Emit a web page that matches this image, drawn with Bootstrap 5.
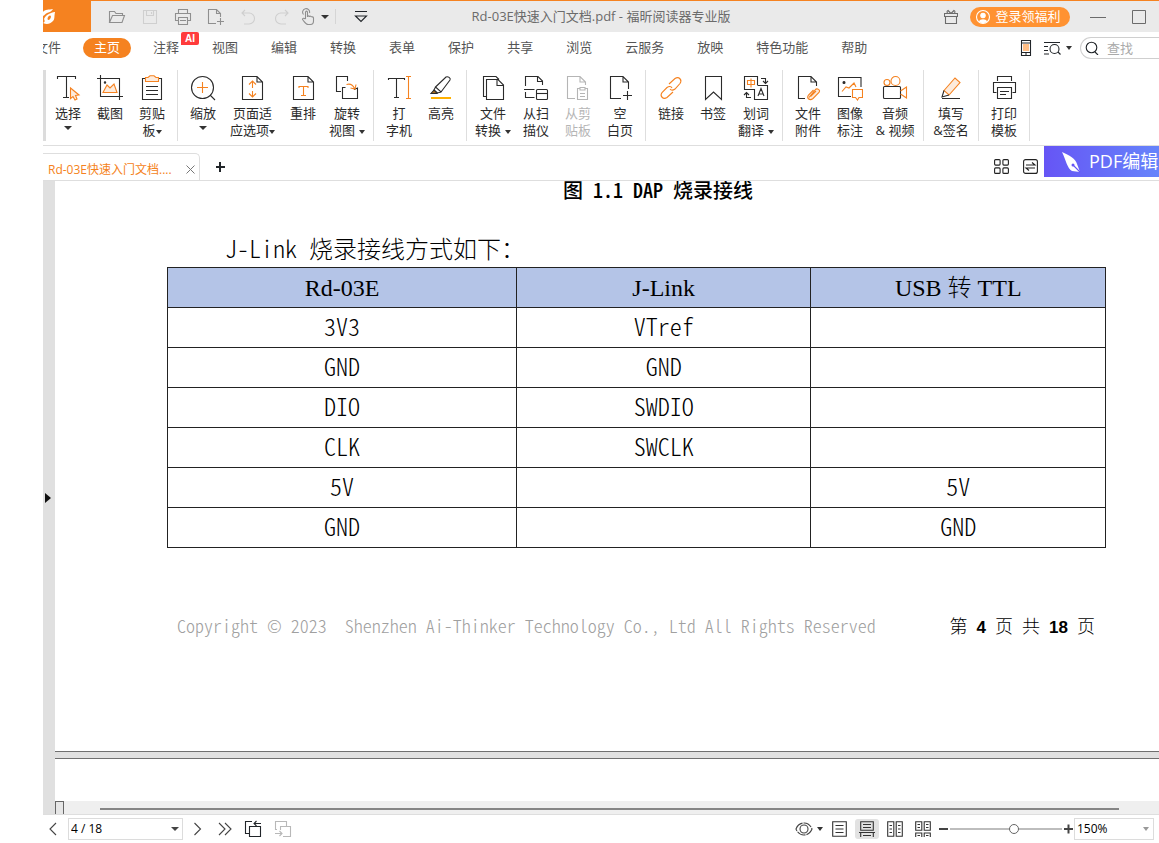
<!DOCTYPE html>
<html lang="zh-CN">
<head>
<meta charset="utf-8">
<meta name="viewport" content="width=device-width, initial-scale=1">
<title>Rd-03E快速入门文档.pdf - 福昕阅读器专业版</title>
<link href="https://cdn.jsdelivr.net/npm/bootstrap@5.3.0/dist/css/bootstrap.min.css" rel="stylesheet">
<script src="https://cdn.jsdelivr.net/npm/bootstrap@5.3.0/dist/js/bootstrap.bundle.min.js" defer></script>
<style>
:root{--fx:#f58220;--ln:#dedede;--ink:#2b2b2b}
body{font-family:"Open Sans","Noto Sans CJK SC",sans-serif;font-size:13px;line-height:17px;color:#222;background:#fff}
svg{display:block;fill:none;stroke:currentColor;stroke-width:1.1;flex:none}
button{background:none;border:0;padding:0;color:inherit;font:inherit;line-height:inherit}
.app{margin-left:43px;height:100vh;overflow:hidden}
.or{stroke:var(--fx)}
.orf{stroke:var(--fx);fill:#fdebdc}
.tri{display:inline-block;border:solid transparent;border-width:4px 4px 0;border-top-color:#333;vertical-align:middle;flex:none}
/* title bar */
.titlebar{height:32px;background:#eaeaea;border-top:1px solid var(--fx);display:grid;grid-template-columns:1fr auto 1fr;color:#6b6b6b;flex:none}
.brand{width:48px;background:var(--fx);margin-right:9px}
.brand svg{margin-top:7px}
.qbtn{width:33px;height:31px;display:flex;align-items:center;justify-content:center;color:#8f8f8f}
.qbtn:disabled{color:#cfcfcf}
.login{background:#ff9232;color:#fff;border-radius:10px;height:20px;width:100px;margin:0 19px 0 12px;padding-right:4px}
/* menu */
.menubar{height:32px;flex:none;color:#555}
.menubar nav{gap:11px;margin-left:-19px}
.menubar nav a{color:#555;text-decoration:none;padding:1px 11px;white-space:nowrap;position:relative;height:20px}
.menubar nav a.on{background:var(--fx);color:#fff;border-radius:10px}
.ai{position:absolute;left:39px;top:-6px;background:#ff3b3b;color:#fff;font:bold 10px/13px "Liberation Sans",sans-serif;padding:0 4px;border-radius:2px 2px 2px 0}
.find{width:79px;height:22px;border:1px solid #cfcfcf;border-right:0;border-radius:11px 0 0 11px;padding-left:4px}
.find input{border:0;outline:0;width:50px;padding:0 0 0 8px;font:inherit;background:none}
.find input::placeholder{color:#aaa}
/* ribbon */
.ribbon{padding:6px 0 4px;border-bottom:1px solid var(--ln);flex:none;height:82px}
.grip{width:3px;background:#dcdcdc}
.rgroup{border-right:1px solid var(--ln);padding:5px 4px 0}
.grip + .rgroup{padding-left:1px}
.rbtn{width:42px;display:flex;flex-direction:column;align-items:center;color:var(--ink);white-space:nowrap}
.rbtn svg{margin-bottom:4px}
.rbtn:disabled{color:#b5b5b5}
.rbtn span .tri{border-width:4px 3px 0}
.wide-a{width:44px}.wide-b{width:48px}.wide-c{width:57px}
/* tabs */
.tabstrip{height:35px;border-bottom:1px solid var(--ln);flex:none}
.doctab{height:27px;width:157px;border:solid var(--ln);border-width:1px 1px 0 0;border-radius:0 5px 0 0;color:var(--fx);padding:4px 4px 0 5px;font-size:12px}
.promo{width:115px;height:31px;background:linear-gradient(90deg,#6655f5,#6684fb);color:#fff;font-size:18px;overflow:hidden;white-space:nowrap;padding-left:15px;text-decoration:none}
/* document */
.rail{width:12px;background:#e0e0e0;color:#111;flex:none}
.sheet{height:570px;padding:0 53px 0 112px;font-family:"Noto Sans CJK SC",sans-serif;font-feature-settings:"hwid";font-weight:300;color:#000;flex:none}
.caption{font-size:20px;line-height:17px;font-weight:500;padding-left:43px}
.lead-in{font-size:24px;line-height:30px;padding-left:58px;margin:35px 0 4px}
.pins{width:100%;table-layout:fixed;border-collapse:collapse;text-align:center;font-size:24px;line-height:30px}
.pins td,.pins th{border:1px solid #222;height:40px;padding:0}
.pins td{padding-bottom:4px}
.pins th{background:#b4c4e7;font-family:"Liberation Serif","Noto Sans CJK SC",serif;font-weight:300;font-size:24px}
.foot{font-size:18px;line-height:24px;margin-top:65px;padding:0 11px 0 10px;white-space:pre}
.foot .cr{color:#a0a0a0}
.foot b{font:bold 17px/24px "Liberation Sans",sans-serif}
.gap-line{height:8px;background:#e0e0e0;border:solid #6f6f6f;border-width:1px 0;flex:none}
.hbar{height:13px;background:#efefef;flex:none}
.hbar .corner{width:9px;height:13px;border:1px solid #666;border-bottom:0;background:#e6e6e6}
.hbar .thumbline{height:2px;background:#858585;margin:2px 40px 0 36px}
/* status bar */
.status{height:29px;border-top:1px solid var(--ln);flex:none;color:#444}
.status select{appearance:none;border:1px solid #dcdcdc;height:22px;border-radius:0;padding:0 2px;font-size:12px;line-height:18px;color:#000;background:#fff url("data:image/svg+xml,%3Csvg xmlns='http://www.w3.org/2000/svg' width='8' height='4'%3E%3Cpath d='M0 0h8L4 4z' fill='%23444'/%3E%3C/svg%3E") no-repeat right 3px center}
.status .pg{width:115px;margin:0 10px}
.status .zm{width:80px;margin-right:5px;background-image:url("data:image/svg+xml,%3Csvg xmlns='http://www.w3.org/2000/svg' width='8' height='4'%3E%3Cpath d='M1 0h6L4 4z' fill='%23999'/%3E%3C/svg%3E")}
.view{width:24px;height:20px;margin-right:4px;display:flex;align-items:center;justify-content:center;border-radius:3px;color:#333}
.view.on{background:#e2e2e2}
.zoomer{appearance:none;width:112px;height:12px;margin:0 2px;background:linear-gradient(#bdbdbd,#bdbdbd) center/100% 2px no-repeat}
.zoomer::-webkit-slider-thumb{appearance:none;width:10px;height:10px;border-radius:50%;background:#fff;border:1px solid #666}
</style>
</head>
<body>
<div class="app d-flex flex-column">
<header class="titlebar">
  <div class="d-flex">
    <div class="brand"><svg width="14" height="18" viewBox="0 0 14 18" style="stroke:none;fill:#fff"><path d="M0 4C2 1 6 2 10 1C9 3 7 4 4 5C2 6 2 7 0 8zM8 5c2-1 3-1 4-1c-1 5 0 7-2 9c-3 3-6 4-10 2c2-1 2-2 1-4c1-3 4-5 7-6zM7 7.500c-2 0-3.500 4.500-1.500 4.500s3.500-4.500 1.500-4.500z" fill-rule="evenodd"/></svg></div>
    <button class="qbtn" aria-label="打开"><svg width="18" height="16"><path d="M1.500 13.500V2.500H6.500L8 4.500H14.500V6.500M1.500 13.500L4.500 6.500H16.500L14 13.500z"/></svg></button>
    <button class="qbtn" aria-label="保存" disabled><svg width="16" height="16"><path d="M1.500 1.500H14.500V14.500H1.500zM4.500 1.500V6.500H11.500V1.500M9.500 3V5"/></svg></button>
    <button class="qbtn" aria-label="打印"><svg width="18" height="18"><path d="M4.500 5V1.500H13.500V5M4.500 12.500H1.500V5.500H16.500V12.500H13.500M4.500 9.500H13.500V16.500H4.500zM6 12.500H12"/></svg></button>
    <button class="qbtn" aria-label="新建"><svg width="18" height="18"><path d="M9 15.500H1.500V1.500H9.500L13.500 5.500V9M9.500 1.500V5.500H13.500M13.500 10V17M10 13.500H17"/></svg></button>
    <button class="qbtn" aria-label="撤销" disabled><svg width="16" height="16"><path d="M4 1L1 4L4 7M1 4H8a5.500 5.500 0 0 1 0 11H3"/></svg></button>
    <button class="qbtn" aria-label="重做" disabled><svg width="16" height="16"><path d="M11 1L14 4L11 7M14 4H7a5.500 5.500 0 0 0 0 11H12"/></svg></button>
    <button class="qbtn" aria-label="触摸模式"><svg width="17" height="18"><path d="M5.500 11V4.500c0-1.800 2-1.800 2 0V9c0-1.500 2-1.500 2 0c0-1.300 2-1 2 .3c0-1 2-.8 2 .7v3c0 2-1 3.500-3 3.500H8c-2 0-3-2-5.500-5c0-1.500 1.500-1.500 3-.5M3.500 6.500A3.500 3.500 0 1 1 9.500 5"/></svg><span class="tri ms-1"></span></button>
    <span class="vr my-2 ms-1 me-1" style="background:#999"></span>
    <button class="qbtn ms-1 text-dark" aria-label="自定义"><svg width="14" height="14"><path d="M1 1.500H13M1.500 6L7 11.500L12.500 6z"/></svg></button>
  </div>
  <div class="align-self-center">Rd-03E快速入门文档.pdf - 福昕阅读器专业版</div>
  <div class="d-flex align-items-center justify-content-end pe-2">
    <button aria-label="礼物"><svg width="14" height="16"><path d="M.5 4.500H13.500V7.500H.5zM1.500 7.500V14.500H12.500V7.500M7 4.500L4 1.500C2.500 2 3 4 4 4.500M7 4.500L10 1.500C11.500 2 11 4 10 4.500"/></svg></button>
    <button class="login d-flex align-items-center justify-content-center gap-1"><svg width="16" height="16"><circle cx="8" cy="8" r="6.500"/><circle cx="8" cy="6.500" r="2.200" fill="#fff"/><path d="M4 12.500C5 9.500 11 9.500 12 12.500C10 14.500 6 14.500 4 12.500z" fill="#fff" stroke="none"/></svg>登录领福利</button>
    <button aria-label="最小化" class="me-4"><svg width="18" height="16"><path d="M1 8.500H17" stroke-width="1"/></svg></button>
    <button aria-label="最大化" class="me-1"><svg width="16" height="16"><path d="M1.500 1.500H14.500V14.500H1.500z" stroke-width="1"/></svg></button>
  </div>
</header>
<div class="menubar d-flex align-items-center justify-content-between">
  <nav class="d-flex">
    <a href="#">文件</a><a href="#" class="on">主页</a><a href="#">注释<span class="ai">AI</span></a><a href="#">视图</a><a href="#">编辑</a><a href="#">转换</a><a href="#">表单</a><a href="#">保护</a><a href="#">共享</a><a href="#">浏览</a><a href="#">云服务</a><a href="#">放映</a><a href="#">特色功能</a><a href="#">帮助</a>
  </nav>
  <div class="d-flex align-items-center text-dark">
    <button aria-label="手机" class="me-2 pe-1"><svg width="12" height="16"><path d="M1.500 .5H10.500V15.500H1.500zM1.500 3H10.500M1.500 12.500H10.500M5 14H7" /><path d="M3 4H9V11H3z" fill="#ffbe86" stroke="none"/></svg></button>
    <button aria-label="高级查找" class="d-flex align-items-center gap-1 me-1 pe-1"><svg width="18" height="14"><path d="M0 1.500H16M0 5.500H4M0 9.500H4M0 13H5M14 11L16.500 13.500"/><circle cx="10.500" cy="8" r="4.500"/></svg><span class="tri" style="border-width:4px 3px 0"></span></button>
    <div class="find d-flex align-items-center"><svg width="14" height="14"><circle cx="6.500" cy="6.500" r="5.300"/><path d="M10 11L13 14"/></svg><input aria-label="查找" placeholder="查找"></div>
  </div>
</div>
<div class="ribbon d-flex">
  <div class="grip"></div>
  <div class="rgroup d-flex">
    <button class="rbtn"><svg width="26" height="26"><path d="M2.500 4V1.500H20.500V4M11.500 1.500V22.500M8 22.500H14"/><path class="orf" d="M15.500 13V23.500L18 21.500L20 25L22 24L20.500 20.500L24 20z"/></svg><span>选择</span><i class="tri mt-1"></i></button>
    <button class="rbtn"><svg width="26" height="26"><path d="M0 3.500H22.500V25M3.500 0V21.500H26"/><path class="orf" d="M6 17.500L10 10L13 13L17 9L20 17.500z"/><circle cx="8" cy="7.500" r=".7"/></svg><span>截图</span></button>
    <button class="rbtn"><svg width="26" height="26"><path d="M6 3.500H3.500V24.500H22.500V3.500H20M7 11.500H19M7 15.500H19M7 19.500H19"/><path class="orf" d="M6.500 2.500H9L11 .8H15L17 2.500H19.500V6.500H6.500z"/></svg><span>剪贴<br>板<i class="tri"></i></span></button>
  </div>
  <div class="rgroup d-flex">
    <button class="rbtn"><svg width="26" height="26"><circle cx="12.500" cy="12.500" r="11"/><path d="M20 20L25 25"/><path class="or" d="M7 12.500H18M12.500 7V18"/></svg><span>缩放</span><i class="tri mt-1"></i></button>
    <button class="rbtn wide-c"><svg width="26" height="26"><path d="M2.500 1.500H17L22.500 7V24.500H2.500zM17 1.500V7H22.500"/><path class="or" d="M12.500 6V13M12.500 16V22M9 9.500L12.500 6L16 9.500M9 18.500L12.500 22L16 18.500"/></svg><span>页面适<br>应选项<i class="tri"></i></span></button>
    <button class="rbtn wide-a"><svg width="26" height="26"><path d="M3.500 1.500H18L23.500 7V24.500H3.500zM18 1.500V7H23.500"/><path class="or" d="M9 13V11.500H18V13M13.500 11.500V20M11 20.500H16"/></svg><span>重排</span></button>
    <button class="rbtn wide-a"><svg width="26" height="26"><path d="M7 16.500H2.500V1.500H13.500V6M11.500 12.500H8.500V23.500H23.500V13L20 14.500"/><path class="or" d="M12.500 9.500C16 8.500 19 10 20.500 13.500M16.500 13L21 14L22 9.500"/></svg><span>旋转<br>视图<i class="tri ms-1"></i></span></button>
  </div>
  <div class="rgroup d-flex">
    <button class="rbtn"><svg width="26" height="26"><path d="M2.500 5V3.500H18.500V5M10.500 3.500V22.500M8 22.500H13"/><path class="or" d="M20 1.500H25M22.500 1.500V23M20 23.500H25"/></svg><span>打<br>字机</span></button>
    <button class="rbtn"><svg width="26" height="26"><path d="M7.500 12L18 2C20 1 23 3 22 5L13 17zM7.500 12L6 15L9.500 18L13 17"/><path d="M6 15L3 18.500H9z" fill="#a56b20"/><path d="M3 23H23" stroke="#ffb000" stroke-width="2"/></svg><span>高亮</span></button>
  </div>
  <div class="rgroup d-flex">
    <button class="rbtn wide-a"><svg width="26" height="26"><path d="M6.500 4.500H18L23.500 10V24.500H6.500zM17 4.500V10.500H23.500M6 21.500H3.500V1.500H16L19 4.500"/></svg><span>文件<br>转换<i class="tri ms-1"></i></span></button>
    <button class="rbtn"><svg width="26" height="26"><path d="M2.500 11V1.500H15L19.500 6V10M14.500 1.500V6.500H19.500M1 14.500H11.500M2.500 17V22.500H11.500"/><rect x="13.500" y="14.500" width="11" height="10" rx="1"/><path d="M13.500 18.500H24.500"/></svg><span>从扫<br>描仪</span></button>
    <button class="rbtn" disabled><svg width="26" height="26"><path d="M10 23.500H2.500V1.500H15L20.500 7V10M15 1.500V7H20.500M15 13.500H12.500V24.500H22.500V13.500H20M15 12.500H20V15H15zM15 18.500H20M15 21.500H20"/></svg><span>从剪<br>贴板</span></button>
    <button class="rbtn"><svg width="26" height="26"><path d="M14 23.500H3.500V1.500H16L21.500 7V14M16 1.500V7H21.500M20.500 16V25M16 20.500H25"/></svg><span>空<br>白页</span></button>
  </div>
  <div class="rgroup d-flex">
    <button class="rbtn"><svg width="26" height="26" class="or"><path d="M11 9L17 3.500C21 1 24.500 5 22 8.500L17 14C15 15.500 13 15.500 12 14M15 17L9 22.500C5 25 1.500 21 4 17.500L9 12.500C11 11 13 11 14 13" /></svg><span>链接</span></button>
    <button class="rbtn"><svg width="26" height="26"><path d="M5.500 1.500H21.500V24.500L13.500 17L5.500 24.500z"/></svg><span>书签</span></button>
    <button class="rbtn wide-a"><svg width="26" height="26"><path d="M11 14.500H1.500V1.500H14.500V10M14.500 10.500H24.500V24.500H11.500V14M18 3.500H22.500V8M20 6L22.500 8.500L25 6M8 22.500H3.500V18M1 20L3.500 17.500L6 20M15 21L18 13.500L21 21M16 19H20"/><path class="or" d="M4.500 5.500H11.500V9.500H4.500zM8 3.500V12.500"/></svg><span>划词<br>翻译<i class="tri ms-1"></i></span></button>
  </div>
  <div class="rgroup d-flex">
    <button class="rbtn"><svg width="26" height="26"><path d="M10 23.500H3.500V1.500H16L21.500 7V11M16 1.500V7H21.500"/><path class="orf" d="M14 22.500L20 15C22 12.500 26 15 24 17.500L18 23.500C15 26 11 23.500 13.500 20L18.500 15M15.500 21.500L21 16"/></svg><span>文件<br>附件</span></button>
    <button class="rbtn"><svg width="26" height="26"><path d="M14 21.500H1.500V2.500H24V12"/><circle cx="7" cy="7.500" r="1" fill="#222"/><path class="or" d="M5 16.500L9 12L12 13L17 8L19 12M15.500 14.500H25.500V22.500H22L20.500 25L18.500 22.500H15.500z"/></svg><span>图像<br>标注</span></button>
    <button class="rbtn wide-b"><svg width="26" height="26"><rect x="1.500" y="11.500" width="17" height="12" rx="1"/><g class="or"><circle cx="5" cy="7.500" r="3"/><circle cx="13.500" cy="6" r="4.500"/><path d="M18.500 16L24.500 12V23L18.500 19"/></g></svg><span>音频<br>&amp; 视频</span></button>
  </div>
  <div class="rgroup d-flex">
    <button class="rbtn" style="width:46px"><svg width="26" height="26"><path class="orf" d="M6 15.500L17 3L22 7.500L11 20z"/><path d="M6 15.500L4 22L11 20M4 23.500H22"/></svg><span>填写<br>&amp;签名</span></button>
  </div>
  <div class="rgroup d-flex">
    <button class="rbtn"><svg width="26" height="26"><path d="M6.500 6V1.500H20.500V6M5.500 17.500H2.500V7.500H24.500V17.500H21.500M6.500 12.500H20.500V23.500H6.500zM9 16.500H18M9 19.500H15"/></svg><span>打印<br>模板</span></button>
  </div>
</div>
<div class="tabstrip d-flex align-items-end">
  <div class="doctab d-flex align-items-center justify-content-between text-nowrap"><span>Rd-03E快速入门文档....</span><button aria-label="关闭"><svg width="9" height="9" style="color:#777"><path d="M.5 .5L8.500 8.500M8.500 .5L.5 8.500" stroke-width="1"/></svg></button></div>
  <button aria-label="新标签" class="ms-3 mb-2 text-dark"><svg width="10" height="10" viewBox="1 1 10 10"><path d="M5 1V11M0 6H10" stroke-width="2"/></svg></button>
  <div class="d-flex align-items-center ms-auto align-self-start">
    <button aria-label="缩略图" class="me-2 pe-1 mt-2"><svg width="16" height="16"><rect x=".6" y="1.600" width="5.500" height="5.500" rx="1"/><rect x="8.900" y="1.600" width="5.500" height="5.500" rx="1"/><rect x=".6" y="9.900" width="5.500" height="5.500" rx="1"/><rect x="8.900" y="9.900" width="5.500" height="5.500" rx="1"/></svg></button>
    <button aria-label="切换" class="me-1 mt-2"><svg width="18" height="16"><rect x="1.600" y="1.600" width="13.800" height="13.800" rx="2"/><path d="M4 7H13L10 4.500M13 10H4L7 12.500"/></svg></button>
    <a href="#" class="promo d-flex align-items-center gap-2"><svg width="22" height="22" style="stroke:none"><path d="M3 1C10 4 17 8 18 13L21 21L13 20C8 17 7 9 3 1z" fill="#fff"/><circle cx="14" cy="14" r="1.500" fill="#6655f5"/><path d="M14 14L21 21" stroke="#6655f5"/></svg>PDF编辑</a>
  </div>
</div>
<main class="d-flex flex-grow-1 overflow-hidden">
  <div class="rail d-flex align-items-center"><button aria-label="展开"><svg width="10" height="10" style="stroke:none;fill:#111"><path d="M2 0L8 5L2 10z"/></svg></button></div>
  <div class="d-flex flex-column flex-grow-1">
    <section class="sheet">
      <div class="caption text-center">图 1.1 DAP 烧录接线</div>
      <p class="lead-in">J-Link 烧录接线方式如下：</p>
      <table class="pins">
        <colgroup><col style="width:37.2%"><col style="width:31.4%"><col style="width:31.4%"></colgroup>
        <thead><tr><th>Rd-03E</th><th>J-Link</th><th>USB 转 TTL</th></tr></thead>
        <tbody>
          <tr><td>3V3</td><td>VTref</td><td></td></tr>
          <tr><td>GND</td><td>GND</td><td></td></tr>
          <tr><td>DIO</td><td>SWDIO</td><td></td></tr>
          <tr><td>CLK</td><td>SWCLK</td><td></td></tr>
          <tr><td>5V</td><td></td><td>5V</td></tr>
          <tr><td>GND</td><td></td><td>GND</td></tr>
        </tbody>
      </table>
      <div class="foot d-flex justify-content-between"><span class="cr">Copyright © 2023  Shenzhen Ai-Thinker Technology Co., Ltd All Rights Reserved</span><span>第 <b>4</b> 页 共 <b>18</b> 页</span></div>
    </section>
    <div class="gap-line"></div>
    <section class="flex-grow-1"></section>
    <div class="hbar d-flex align-items-center"><div class="corner"></div><div class="thumbline flex-grow-1"></div></div>
  </div>
</main>
<footer class="status d-flex align-items-center">
  <button aria-label="上一页" class="ms-1"><svg width="11" height="14"><path d="M9 1L3 7L9 13"/></svg></button>
  <select class="pg" aria-label="页码"><option>4 / 18</option></select>
  <button aria-label="下一页"><svg width="9" height="14"><path d="M1.500 1L7.500 7L1.500 13"/></svg></button>
  <button aria-label="末页" class="ms-3"><svg width="14" height="14"><path d="M1 1L7 7L1 13M7 1L13 7L7 13"/></svg></button>
  <button aria-label="后退" class="ms-2 ps-1 text-dark"><svg width="18" height="18"><path d="M5 13.500H1.500V1.500H8M5.500 6.500H16.500V16.500H5.500zM10 3.500H17M12.500 1L10 3.500L12.500 6"/></svg></button>
  <button aria-label="前进" class="ms-2 ps-1" disabled style="color:#b8b8b8"><svg width="18" height="18"><path d="M3 9.500H1.500V1.500H12.500V6M6.500 10V6.500H16.500V16.500H9M1 13.500H8M5.500 11L8 13.500L5.500 16"/></svg></button>
  <div class="d-flex align-items-center ms-auto">
    <button aria-label="显示" class="d-flex align-items-center gap-1 me-1"><svg width="18" height="16"><path d="M1 8C4 0 14 0 17 8C14 16 4 16 1 8z" stroke-dasharray="9 1"/><circle cx="9" cy="8" r="4"/></svg><span class="tri" style="border-width:4px 3px 0"></span></button>
    <button class="view" aria-label="单页"><svg width="15" height="16"><path d="M.7 .7H14.300V15.300H.7zM3.500 4.500H11.500M3.500 8H11.500M3.500 11.500H11.500"/></svg></button>
    <button class="view on" aria-label="连续"><svg width="16" height="16"><path d="M1.700 .7H14.300V9.300H1.700zM4 3.500H12M4 6.500H12M0 11.500H16M1.700 16V12M14.300 16V12M4 14.500H12"/></svg></button>
    <button class="view" aria-label="双页"><svg width="16" height="16"><path d="M.7 .7H6.800V15.300H.7zM9.200 .7H15.300V15.300H9.200zM2.500 4.500H5M2.500 8H5M2.500 11.500H5M11 4.500H13.500M11 8H13.500M11 11.500H13.500"/></svg></button>
    <button class="view" aria-label="双页连续"><svg width="16" height="16"><path d="M.7 .7H6.800V9.300H.7zM9.200 .7H15.300V9.300H9.200zM2.500 3.500H5M2.500 6.500H5M11 3.500H13.500M11 6.500H13.500M.7 16V12H6.800V16M9.200 16V12H15.300V16M2.500 14.500H5M11 14.500H13.500"/></svg></button>
    <button aria-label="缩小"><svg width="9" height="10"><path d="M0 5H9" stroke-width="2"/></svg></button>
    <input type="range" class="zoomer" aria-label="缩放" value="58">
    <button aria-label="放大"><svg width="10" height="10"><path d="M0 5H9M4.500 .5V9.500" stroke-width="2"/></svg></button>
    <select class="zm" aria-label="缩放比例"><option>150%</option></select>
  </div>
</footer>
</div>
</body>
</html>
